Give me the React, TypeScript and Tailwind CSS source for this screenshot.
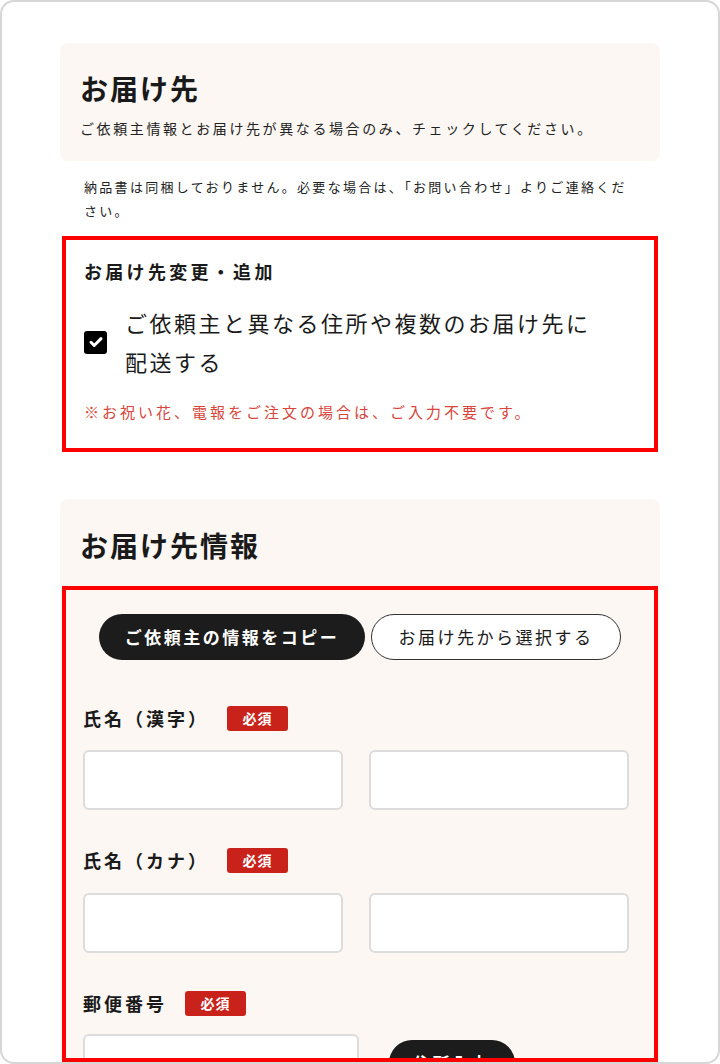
export default function App() {
  return (
    <div className="w-[720px] h-[1064px] overflow-hidden rounded-[14px] border-2 border-[#d6d6d6] bg-white px-[58px] pt-[41px] font-['Noto_Sans_CJK_JP',sans-serif] text-[#1a1a1a]">
      {/* お届け先 */}
      <div className="rounded-[8px] bg-[#fcf7f3] px-[20px] pt-[25px] pb-[21px]">
        <h2 className="text-[28px] leading-[40px] font-bold tracking-[2px]">お届け先</h2>
        <p className="mt-[8px] text-[14px] leading-[24px] tracking-[2.6px] text-[#222]">
          ご依頼主情報とお届け先が異なる場合のみ、チェックしてください。
        </p>
      </div>
      <p className="mt-[14px] pl-[24px] pr-[26px] text-[13px] leading-[24px] tracking-[2.3px] text-[#222]">
        納品書は同梱しておりません。必要な場合は、「お問い合わせ」よりご連絡ください。
      </p>

      <div className="mx-[2px] mt-[13px] h-[216px] border-4 border-[#ff0000] pt-[17px] pl-[18px]">
        <h3 className="text-[18px] leading-[28px] font-bold tracking-[3.3px]">お届け先変更・追加</h3>
        <label className="mt-[18px] flex items-center">
          <span className="flex h-[23px] w-[23px] shrink-0 items-center justify-center rounded-[3px] bg-black">
            <svg width="16" height="16" viewBox="0 0 16 16" fill="none">
              <path d="M3 8.3l3.2 3.2L13 4.6" stroke="white" strokeWidth="3" strokeLinecap="round" strokeLinejoin="round" />
            </svg>
          </span>
          <span className="ml-[18px] w-[480px] text-[22px] leading-[39px] tracking-[2.5px]">
            ご依頼主と異なる住所や複数のお届け先に配送する
          </span>
        </label>
        <p className="mt-[19px] text-[15px] leading-[24px] tracking-[3px] text-[#d9453b]">
          ※お祝い花、電報をご注文の場合は、ご入力不要です。
        </p>
      </div>

      {/* お届け先情報 */}
      <div className="mt-[47px] rounded-t-[8px] bg-[#fcf7f3] pt-[26px]">
        <h2 className="pl-[20px] text-[28px] leading-[40px] font-bold tracking-[2px]">お届け先情報</h2>
        <div className="mx-[2px] mt-[21px] h-[476px] overflow-hidden border-4 border-[#ff0000] pt-[24px] pl-[17px]">
          <div className="-ml-[17px] flex justify-center gap-[6px]">
            <button className="h-[46px] w-[266px] rounded-full bg-[#1c1c1c] text-[17px] font-bold tracking-[2.5px] text-white">
              ご依頼主の情報をコピー
            </button>
            <button className="h-[46px] w-[250px] rounded-full border border-[#333] bg-white text-[17px] tracking-[2.5px]">
              お届け先から選択する
            </button>
          </div>

          <FieldLabel text="氏名（漢字）" className="mt-[44px]" />
          <div className="mt-[18px] flex gap-[26px]">
            <Input className="w-[260px]" />
            <Input className="w-[260px]" />
          </div>

          <FieldLabel text="氏名（カナ）" className="mt-[36px]" />
          <div className="mt-[19px] flex gap-[26px]">
            <Input className="w-[260px]" />
            <Input className="w-[260px]" />
          </div>

          <FieldLabel text="郵便番号" className="mt-[36px]" />
          <div className="mt-[17px] flex items-start">
            <Input className="w-[276px]" />
            <button className="ml-[30px] mt-[6px] h-[46px] w-[126px] rounded-full bg-[#1c1c1c] text-[17px] font-bold tracking-[2.5px] text-white">
              住所入力
            </button>
          </div>
        </div>
      </div>
    </div>
  )
}

function FieldLabel({ text, className }: { text: string; className: string }) {
  return (
    <div className={"flex h-[28px] items-center " + className}>
      <span className="text-[18px] font-bold tracking-[3px]">{text}</span>
      <span className="ml-[18px] flex h-[25px] w-[61px] items-center justify-center rounded-[3px] bg-[#c8221b] text-[14px] font-bold tracking-[1px] text-white">
        必須
      </span>
    </div>
  )
}

function Input({ className }: { className: string }) {
  return <div className={"h-[60px] rounded-[6px] border-2 border-[#dcdcdc] bg-white " + className} />
}
